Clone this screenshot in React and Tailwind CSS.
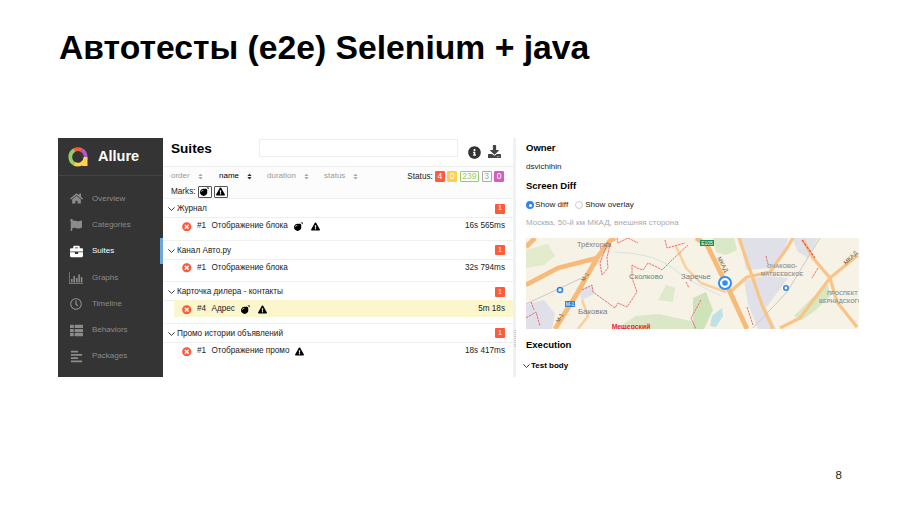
import React from "react";
import { FaHome, FaFlag, FaBriefcase, FaRegClock, FaThList, FaAlignLeft, FaBomb, FaExclamationTriangle, FaInfoCircle, FaDownload, FaSort, FaTimesCircle } from "react-icons/fa";

const Chart = ({ className }) => (
  <svg viewBox="0 0 14 12" className={className} fill="currentColor">
    <path d="M0 0h.7v11.3H14V12H0z" />
    <path d="M2 7h1.6v3.6H2zM4.4 4h1.6v6.6H4.4zM6.9 6h1.6v4.6H6.9zM9.3 2.5h1.6v8.1H9.3zM11.8 5h1.6v5.6h-1.6z" />
  </svg>
);

const Chevron = () => (
  <svg viewBox="0 0 7 4" className="w-[7px] h-[4px] shrink-0" fill="none" stroke="#222222" strokeWidth="0.9">
    <path d="M0.4 0.4L3.5 3.4L6.6 0.4" />
  </svg>
);

const nav = [
  ["Overview", FaHome, 13],
  ["Categories", FaFlag, 12],
  ["Suites", FaBriefcase, 13, true],
  ["Graphs", Chart, 14],
  ["Timeline", FaRegClock, 12],
  ["Behaviors", FaThList, 13],
  ["Packages", FaAlignLeft, 13],
];

const Logo = () => (
  <svg viewBox="0 0 20 20" className="w-5 h-5">
    <g fill="none" strokeWidth="3.8">
      <path d="M6 16.6A7.8 7.8 0 0 1 6.6 3" stroke="#97cc64" />
      <path d="M6.6 3A7.8 7.8 0 0 1 13.5 3" stroke="#fd5a3e" />
      <path d="M13.5 3A7.8 7.8 0 0 1 17.6 10" stroke="#aa5bc0" />
      <path d="M6 16.6A7.8 7.8 0 0 0 17.6 11" stroke="#ffd050" />
    </g>
    <path d="M15.7 10h3.8v9h-5.5z" fill="#ffd050" />
  </svg>
);

const Sidebar = () => (
  <aside className="w-[105px] shrink-0 bg-[#343434] flex flex-col relative">
    <div className="h-[38px] flex items-center pl-[10px] gap-[10px] border-b border-[#444444]">
      <Logo />
      <span className="text-[14.5px] font-bold text-white">Allure</span>
    </div>
    <nav className="flex flex-col pt-[9.5px]">
      {nav.map(([label, Icon, size, active]) => (
        <div key={label} className={`h-[26.3px] flex items-center text-[8px] ${active ? "text-white font-medium" : "text-[#8b8b8b]"}`}>
          <span className="w-[34px] flex justify-center pl-[2px]">
            <Icon className={size === 14 ? "w-[14px] h-[12px]" : ""} size={size} />
          </span>
          <span>{label}</span>
          {active && <span className="absolute right-0 w-[3px] h-[26px] bg-[#6ba9dc]" />}
        </div>
      ))}
    </nav>
  </aside>
);

const Sort = ({ label, dark, w }) => (
  <span className={`flex items-center gap-[7px] ${dark ? "text-black font-medium" : "text-[#9a9a9a]"} ${w}`}>
    {label}
    <FaSort size={7} className={dark ? "text-[#333333]" : "text-[#aaaaaa]"} />
  </span>
);

const Badge = ({ children, cls }) => (
  <span className={`h-[11px] px-[1.5px] min-w-[10px] rounded-[1px] border flex items-center justify-center text-[8.5px] font-medium leading-none ${cls}`}>{children}</span>
);

const Bomb = () => <FaBomb size={9} className="text-black" />;
const Warn = () => <FaExclamationTriangle size={9} className="text-black" />;

const groups = [
  { title: "Журнал", n: "#1", name: "Отображение блока", marks: [1, 1], time: "16s 565ms" },
  { title: "Канал Авто.ру", n: "#1", name: "Отображение блока", marks: [], time: "32s 794ms" },
  { title: "Карточка дилера - контакты", n: "#4", name: "Адрес", marks: [1, 1], time: "5m 18s", hl: true },
  { title: "Промо истории объявлений", n: "#1", name: "Отображение промо", marks: [0, 1], time: "18s 417ms" },
];

const Group = ({ g }) => (
  <div className="h-[41.67px] border-t border-[#f0f0f0]">
    <div className="h-[19px] pt-[2px] flex items-center pl-[5px] pr-[8px] border-b border-[#eeeeee] text-[8.2px] text-[#222222]">
      <Chevron />
      <span className="ml-[2px]">{g.title}</span>
      <span className="ml-auto w-[10px] h-[10px] -mt-[1px] rounded-[1px] bg-[#fd5a3e] text-white text-[7px] font-medium flex items-center justify-center">1</span>
    </div>
    <div className={`h-[17px] ml-[11px] pl-[8px] pr-[8px] flex items-center text-[8.2px] text-[#222222] ${g.hl ? "bg-[#fcf6cd] -mt-[1px] pt-[1px]" : ""}`}>
      <FaTimesCircle size={9.5} className="text-[#fd5a3e] mr-[5.5px]" />
      <span className="w-[14.5px]">{g.n}</span>
      <span>{g.name}</span>
      {g.marks[0] ? <span className="ml-[6px]"><Bomb /></span> : null}
      {g.marks[1] ? <span className={g.marks[0] ? "ml-[8px]" : "ml-[5px]"}><Warn /></span> : null}
      <span className="ml-auto">{g.time}</span>
    </div>
  </div>
);

const Suites = () => (
  <section className="w-[350px] shrink-0 flex flex-col">
    <div className="h-[29px] flex items-center pl-[8px] border-b border-[#eeeeee]">
      <h2 className="w-[88px] text-[13.6px] font-bold text-black -mt-[5px]">Suites</h2>
      <div className="w-[199px] h-[18px] -mt-[9px] border border-[#eeeeee] bg-white" />
      <FaInfoCircle size={13} className="ml-[10px] text-[#333333]" />
      <FaDownload size={13} className="ml-[7px] text-[#444444] -mt-[2px]" />
    </div>
    <div className="h-[31px] bg-[#fcfcfc] pl-[8px] pr-[9px] text-[8px] flex flex-col">
      <div className="h-[17px] mt-[1px] flex items-center">
        <Sort label="order" w="w-[48px]" />
        <Sort label="name" dark w="w-[48px]" />
        <Sort label="duration" w="w-[57px]" />
        <Sort label="status" />
        <span className="ml-auto text-[8.2px] text-[#222222] mr-[2px] mt-[1px]">Status:</span>
        <div className="flex gap-[2.5px]">
          <Badge cls="bg-[#fd5a3e] border-[#fd5a3e] text-white">4</Badge>
          <Badge cls="bg-[#ffd050] border-[#ffd050] text-white">0</Badge>
          <Badge cls="border-[#97cc64] text-[#97cc64]">239</Badge>
          <Badge cls="border-[#aaaaaa] text-[#aaaaaa]">3</Badge>
          <Badge cls="bg-[#d35ebe] border-[#d35ebe] text-white">0</Badge>
        </div>
      </div>
      <div className="flex items-center gap-[2px] mt-[1px] text-[8.2px] text-[#222222]">
        <span>Marks:</span>
        <span className="w-[14px] h-[12px] border border-[#555555] rounded-[1px] flex items-center justify-center"><Bomb /></span>
        <span className="w-[14px] h-[12px] border border-[#555555] rounded-[1px] flex items-center justify-center"><Warn /></span>
      </div>
    </div>
    {groups.map((g) => <Group key={g.title} g={g} />)}
  </section>
);

const majorRoads = [
  "M29 91L52 54L71 20L84 3L89 0",
  "M0 47L32 30L71 20",
  "M170 0L181 7L204 54L221 91",
  "M0 9L9 0",
];

const minorRoads = [
  "M204 54L221 39L244 34L261 10L267 0",
  "M213 0L236 67L247 91",
  "M277 2L287 20L304 40L311 64L331 89",
  "M254 90L274 80L304 40L332 17",
  "M52 91L62 78L56 62",
  "M150 8L160 30L175 45L200 54",
];

const redLines = [
  "M82 4L74 25L76 37L82 30L81 20L84 6",
  "M91 0L92 5L102 0L112 5",
  "M56 52L66 47L67 54L89 70L92 65L101 69L111 54L106 40L106 27L111 30L117 32L122 25L131 29L136 32L146 22L162 7",
  "M139 2L141 10L159 5",
  "M0 80L10 74L14 88",
  "M221 69L227 87",
  "M240 18L242 26",
  "M175 62L165 80L170 91",
  "M160 44L163 50",
  "M292 30L286 40",
  "M5 64L8 72",
];

const Map = () => (
  <svg viewBox="0 0 333 91" className="w-[333px] h-[91px] block" style={{ fontFamily: "'Liberation Sans', sans-serif" }}>
    <rect width="333" height="91" fill="#f6f2e5" />
    <path d="M0 12L22 6L29 18L18 27L0 30z" fill="#e2ebcc" />
    <path d="M0 66L18 62L29 76L26 91H0z" fill="#e0e0e8" />
    <path d="M52 52L66 47L68 56L56 62z" fill="#e0e0e8" />
    <path d="M214 0H262L258 14L244 30L220 32z" fill="#e0e0e8" />
    <path d="M218 42L240 38L262 40L240 70L250 91H232L222 66z" fill="#e0e0e8" />
    <path d="M266 0H292L282 20L272 14z" fill="#e0e0e8" />
    <path d="M89 91L110 78L133 76L169 84V91z" fill="#dbe8c8" />
    <path d="M132 62L140 47L149 50L147 64z" fill="#dfeacc" />
    <path d="M167 60L180 54L187 72L178 91H167z" fill="#cfe3bb" />
    <path d="M184 88L186 78L196 70L197 78L190 89z" fill="#bfe0e6" />
    <path d="M268 78L284 62L302 46L304 58L290 72L276 82z" fill="#d7e7c4" />
    <path d="M187 0H208L211 12L200 17L190 14z" fill="#d9e8c6" />
    <g fill="none" stroke="#cde2e8" strokeWidth="0.9">
      <path d="M88 14C110 15 130 18 147 30C160 42 175 48 195 58" />
    </g>
    <g fill="none" stroke="#c8c8c8" strokeWidth="1">
      <path d="M0 66L60 38L76 20" />
      <path d="M227 90L261 54L294 0" />
    </g>
    <g fill="none" stroke="#f9cf9c" strokeWidth="2.4" strokeLinejoin="round">
      {minorRoads.slice(4).map((d) => <path key={d} d={d} />)}
    </g>
    <g fill="none" stroke="#f9c486" strokeWidth="3.2" strokeLinejoin="round">
      {minorRoads.slice(0, 4).map((d) => <path key={d} d={d} />)}
    </g>
    <g fill="none" stroke="#f8ba78" strokeWidth="4.8" strokeLinejoin="round">
      {majorRoads.map((d) => <path key={d} d={d} />)}
    </g>
    <g fill="none" stroke="#f04c55" strokeWidth="0.8" strokeDasharray="2.5 0.8">
      {redLines.map((d) => <path key={d} d={d} />)}
    </g>
    <path d="M276 2L289 20" fill="none" stroke="#e8453f" strokeWidth="1.1" strokeDasharray="3 1" />
    <g fill="#7d7d7d">
      <text x="51" y="9" fontSize="7.4">Трёхгорка</text>
      <text x="103" y="41" fontSize="7.8">Сколково</text>
      <text x="155" y="41" fontSize="7.8">Заречье</text>
      <text x="52" y="76" fontSize="7.8">Баковка</text>
      <text x="256" y="30" fontSize="5.6" textAnchor="middle" fontWeight="700" fill="#999999">ОЧАКОВО-</text>
      <text x="256" y="38" fontSize="5.6" textAnchor="middle" fontWeight="700" fill="#999999">МАТВЕЕВСКОЕ</text>
      <text x="301" y="57" fontSize="5.6" fontWeight="700" fill="#999999">ПРОСПЕКТ</text>
      <text x="293" y="65" fontSize="5.6" fontWeight="700" fill="#999999">ВЕРНАДСКОГО</text>
      <text fontSize="5.5" fill="#6c5a3c" transform="translate(58 44) rotate(-58)">М-1</text>
      <text fontSize="5.5" fill="#6c5a3c" transform="translate(33 85) rotate(-62)">М-1</text>
      <text fontSize="6" fill="#6c5a3c" transform="translate(191 20) rotate(62)">МКАД</text>
      <text fontSize="6" fill="#6c5a3c" transform="translate(320 27) rotate(-45)">МКАД</text>
    </g>
    <text x="105" y="91" fontSize="6.8" fontWeight="700" fill="#e8262b" textAnchor="middle">Мещерский</text>
    <rect x="39" y="63" width="10" height="6" fill="#3c7fd0" />
    <text x="44" y="68" fontSize="5" fill="#ffffff" textAnchor="middle">М-1</text>
    <rect x="174" y="2" width="14" height="6" fill="#1e8b5a" />
    <text x="181" y="7" fontSize="5" fill="#ffffff" textAnchor="middle">E105</text>
    <circle cx="34" cy="52" r="2.5" fill="#fff" stroke="#2f86e0" strokeWidth="1.6" />
    <circle cx="260" cy="50" r="2.2" fill="#fff" stroke="#2f86e0" strokeWidth="1.6" />
    <circle cx="199" cy="45" r="6" fill="#ffffff" stroke="#2f8ff0" strokeWidth="2" />
    <circle cx="199" cy="45" r="2.8" fill="#2f8ff0" />
  </svg>
);

const Detail = () => (
  <section className="flex-1 pl-[10px] flex flex-col text-[8.1px] text-[#222222]">
    <h3 className="h-[14px] mt-[3px] text-[9.5px] font-bold text-black flex items-center">Owner</h3>
    <p className="mt-[6px] h-[12px] flex items-center">dsvichihin</p>
    <h3 className="mt-[6.5px] h-[14px] text-[9.5px] font-bold text-black flex items-center">Screen Diff</h3>
    <div className="mt-[5.5px] h-[12px] flex items-center">
      <span className="w-[8px] h-[8px] rounded-full bg-[#2f86f0] border-[2px] border-[#2f86f0] flex items-center justify-center mr-[1px]">
        <span className="w-[3px] h-[3px] rounded-full bg-white" />
      </span>
      <span>Show diff</span>
      <span className="w-[8px] h-[8px] rounded-full border border-[#cccccc] ml-[7px] mr-[2px]" />
      <span>Show overlay</span>
    </div>
    <p className="mt-[6px] h-[12px] flex items-center text-[8px] text-[#aaaaaa]">Москва, 50-й км МКАД, внешняя сторона</p>
    <div className="mt-[9px]"><Map /></div>
    <h3 className="mt-[9px] h-[14px] text-[9.5px] font-bold text-black flex items-center">Execution</h3>
    <div className="mt-[7.5px] -ml-[3px] h-[12px] flex items-center gap-[1px] text-[8px] font-bold text-black">
      <Chevron />
      <span>Test body</span>
    </div>
  </section>
);

export default function App() {
  return (
    <div className="w-[900px] h-[506px] bg-white flex flex-col overflow-hidden" style={{ fontFamily: "'Liberation Sans', Arial, sans-serif" }}>
      <h1 className="ml-[59px] mt-[28px] h-[40px] flex items-center text-[33.7px] leading-none font-bold text-black">Автотесты (e2e) Selenium + java</h1>
      <main className="ml-[58px] mt-[70px] w-[801px] h-[239px] flex">
        <Sidebar />
        <Suites />
        <div className="w-[3px] shrink-0 bg-[#eef2f5] relative">
          <div className="absolute left-[1px] top-[192px] w-[2px] h-[17px] border-x border-dotted border-[#c9cdd0]" />
        </div>
        <Detail />
      </main>
      <footer className="mt-[90px] pr-[58px] text-right text-[11.5px] text-[#222222]">8</footer>
    </div>
  );
}
